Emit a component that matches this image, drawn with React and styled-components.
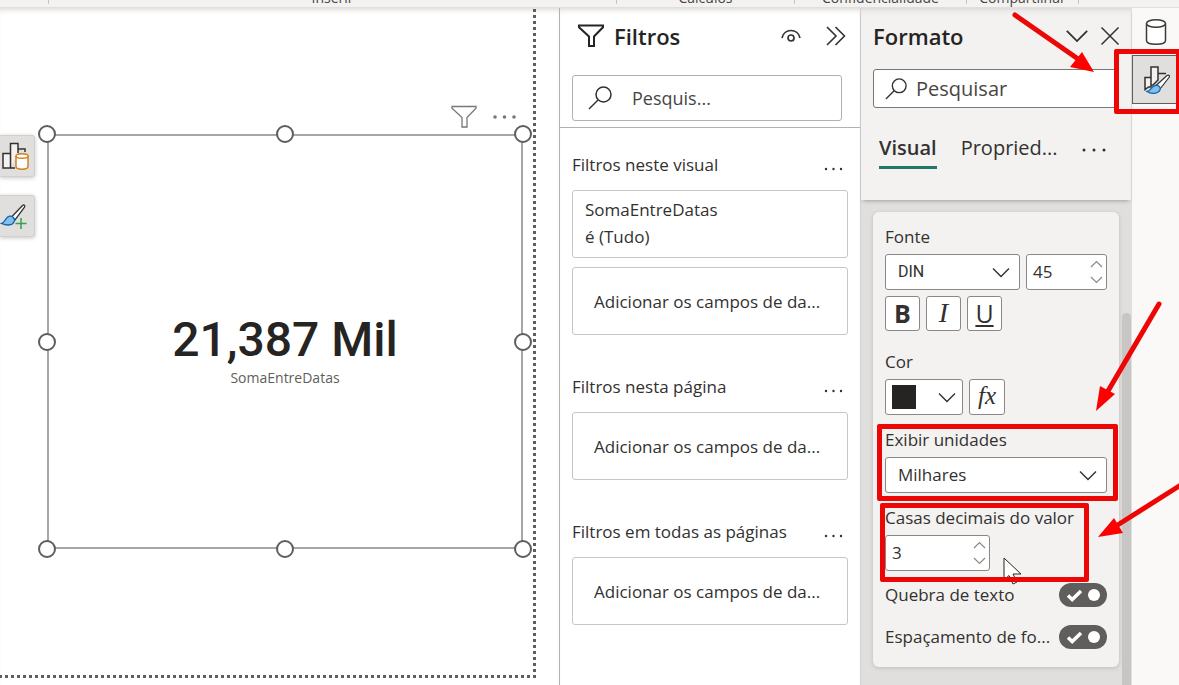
import React, { useState } from "react";
import styled, { createGlobalStyle } from "styled-components";

const GlobalStyle = createGlobalStyle`
  * {
    box-sizing: border-box;
  }
  body {
    margin: 0;
    font-family: "Open Sans", "Noto Sans", sans-serif;
    font-size: 17px;
    line-height: 24px;
    color: #323130;
    background-color: #ffffff;
  }
  button, input, select {
    font: inherit;
    color: inherit;
  }
  h2, h3, p {
    margin: 0;
    font-weight: 400;
    font-size: inherit;
  }
`;

const Page = styled.div`
  position: relative;
  display: flex;
  flex-direction: column;
  height: 100vh;
  overflow: hidden;
`;

/* ribbon */
const Ribbon = styled.header`
  position: relative;
  z-index: 2;
  display: flex;
  align-items: flex-end;
  height: 8px;
  flex-shrink: 0;
  overflow: hidden;
  background-color: #f3f2f1;
  border-bottom: 1px solid #e1dfdd;
`;
const RibbonGroup = styled.div`
  flex: ${(props) => props.$grow || "none"};
  width: ${(props) => props.$width}px;
  height: 18px;
  text-align: center;
  color: #484644;
  font-size: 14px;
  line-height: 18px;
`;
const RibbonDivider = styled.span`
  width: 1px;
  height: 4px;
  align-self: flex-start;
  background-color: #c8c6c4;
`;

const Main = styled.main`
  display: flex;
  flex: 1;
  min-height: 0;
`;

/* report canvas */
const Canvas = styled.section`
  position: relative;
  display: flex;
  flex: 1;
  min-width: 0;
  padding: 0 23px 7px 0;
  box-shadow: inset 0 6px 6px -5px #d2d0ce;
`;
const Sheet = styled.div`
  display: flex;
  flex: 1;
  padding: 126px 13px 129px 47px;
  background:
    repeating-linear-gradient(to bottom, transparent 0 1px, #605e5c 1px 4px, transparent 4px 6px) right top / 3px 100% no-repeat,
    repeating-linear-gradient(to left, #605e5c 0 3px, transparent 3px 6px) left bottom / 100% 3px no-repeat;
`;
const Visual = styled.div`
  position: relative;
  flex: 1;
  display: flex;
  flex-direction: column;
  align-items: center;
  justify-content: center;
  padding-top: 16px;
  border: 2px solid #a6a6a6;
`;
const VisualTools = styled.div`
  position: absolute;
  right: 5px;
  top: -31px;
  display: flex;
  align-items: center;
  gap: 16px;
`;
const Handles = styled.div`
  position: absolute;
  inset: -2px;
`;
const Handle = styled.span`
  position: absolute;
  left: ${(props) => props.$x}%;
  top: ${(props) => props.$y}%;
  width: 18px;
  height: 18px;
  margin: -9px;
  border: 2px solid #605e5c;
  border-radius: 50%;
  background-color: #ffffff;
`;
const CardValue = styled.div`
  font-family: Roboto, sans-serif;
  font-size: 48px;
  font-weight: 500;
  line-height: 56px;
  color: #252423;
`;
const CardLabel = styled.div`
  font-size: 14px;
  line-height: 20px;
  color: #605e5c;
`;
const SideTools = styled.div`
  position: absolute;
  left: 0;
  top: 127px;
  display: flex;
  flex-direction: column;
  gap: 18px;
`;
const SideTool = styled.button`
  display: flex;
  align-items: center;
  width: 35px;
  height: 42px;
  padding: 0;
  border: 1px solid #d2d0ce;
  border-left: 0;
  border-radius: 0 3px 3px 0;
  background-color: #e1dfdd;
  box-shadow: 0 1px 4px #c8c6c4;
`;

/* shared controls */
const IconButton = styled.button`
  display: flex;
  align-items: center;
  justify-content: center;
  padding: 0;
  border: 0;
  background: none;
`;
const SearchBox = styled.label`
  display: flex;
  align-items: center;
  gap: ${(props) => props.$gap}px;
  height: ${(props) => props.$height}px;
  padding: 0 14px 0 ${(props) => props.$inset}px;
  border: 1px solid ${(props) => props.$line};
  border-radius: 3px;
  background-color: #ffffff;
  svg {
    flex-shrink: 0;
  }
`;
const SearchInput = styled.input`
  flex: 1;
  min-width: 0;
  padding: 0;
  border: 0;
  outline: 0;
  background: none;
  font-size: ${(props) => props.$size}px;
  &::placeholder {
    color: #484644;
    opacity: 1;
  }
`;

/* filters pane */
const FiltersPane = styled.aside`
  width: 301px;
  flex-shrink: 0;
  border-left: 1px solid #b3b0ad;
  box-shadow: inset 0 6px 6px -5px #d2d0ce;
`;
const FiltersTop = styled.div`
  padding: 12px 18px 6px 12px;
  border-bottom: 1px solid #b3b0ad;
`;
const PaneHeader = styled.div`
  display: flex;
  align-items: center;
  height: 32px;
`;
const PaneTitle = styled.h2`
  flex: 1;
  font-size: 22px;
  font-weight: 600;
  line-height: 32px;
  color: #252423;
`;
const FiltersHeader = styled(PaneHeader)`
  gap: 10px;
  margin-bottom: 23px;
  padding-left: 6px;
  ${IconButton} + ${IconButton} {
    margin-left: 15px;
    margin-right: -4px;
  }
`;
const FiltersBody = styled.div`
  display: flex;
  flex-direction: column;
  gap: 40px;
  padding: 25px 12px;
`;
const FilterSection = styled.section`
  display: flex;
  flex-direction: column;
  gap: 9px;
`;
const FilterHeading = styled.div`
  display: flex;
  align-items: flex-end;
  justify-content: space-between;
  margin-bottom: 4px;
  padding-right: 5px;
  ${IconButton} {
    padding-bottom: 5px;
  }
`;
const FilterCard = styled.div`
  height: 68px;
  padding: 5px 12px;
  border: 1px solid #c8c6c4;
  border-radius: 3px;
  line-height: 27px;
`;
const DropCard = styled(FilterCard)`
  display: flex;
  align-items: center;
  padding: 0 21px;
  white-space: nowrap;
`;

/* format pane */
const FormatPane = styled.aside`
  display: flex;
  flex-direction: column;
  width: 271px;
  flex-shrink: 0;
  border-left: 1px solid #d2d0ce;
  background-color: #e1dfdd;
`;
const FormatTop = styled.div`
  position: relative;
  height: 192px;
  flex-shrink: 0;
  padding: 12px 12px 0;
  background-color: #f3f2f1;
  box-shadow: 0 3px 4px -2px #a19f9d, inset 0 6px 6px -5px #d2d0ce;
`;
const FormatHeader = styled(PaneHeader)`
  gap: 11px;
  margin-bottom: 17px;
  ${IconButton} + ${IconButton} {
    margin-right: -1px;
  }
`;
const Tabs = styled.div`
  display: flex;
  align-items: center;
  gap: 24px;
  margin-top: 22px;
  padding-left: 6px;
`;
const Tab = styled.button`
  height: 39px;
  padding: 0;
  border: 0;
  border-bottom: 3px solid ${(props) => (props.$active ? "#217867" : "transparent")};
  background: none;
  font-size: 20px;
  font-weight: ${(props) => (props.$active ? 600 : 400)};
`;
const FormatBody = styled.div`
  display: flex;
  flex: 1;
  justify-content: space-between;
  padding: 12px 0 0 12px;
`;
const FormatCard = styled.div`
  flex: 1;
  align-self: flex-start;
  display: flex;
  flex-direction: column;
  gap: 13px;
  padding: 13px 12px 18px;
  border-radius: 6px;
  background-color: #f3f2f1;
  box-shadow: 0 1px 4px #bebbb8;
`;
const Scrollbar = styled.div`
  width: 9px;
  margin: 101px 0 0 3px;
  border-radius: 5px 5px 0 0;
  background-color: #c8c6c4;
`;
const Field = styled.div`
  position: relative;
  display: flex;
  flex-direction: column;
  gap: 5px;
`;
const FontField = styled(Field)`
  margin-bottom: 6px;
`;
const Row = styled.div`
  display: flex;
  gap: 6px;
`;
const StyleRow = styled(Row)`
  margin-top: 1px;
`;
const Control = styled.div`
  position: relative;
  display: flex;
  flex: ${(props) => (props.$width ? "none" : 1)};
  width: ${(props) => (props.$width ? `${props.$width}px` : "auto")};
  height: 36px;
  border: 1px solid #8a8886;
  border-radius: 3px;
  background-color: #ffffff;
`;
const Select = styled.select`
  flex: 1;
  min-width: 0;
  padding: 0 12px;
  border: 0;
  outline: 0;
  appearance: none;
  background: none;
  font-family: ${(props) => (props.$din ? "Roboto, sans-serif" : "inherit")};
  font-size: ${(props) => (props.$din ? 16 : 17)}px;
`;
const NumberInput = styled.input`
  flex: 1;
  min-width: 0;
  padding: 0 6px;
  border: 0;
  outline: 0;
  appearance: textfield;
  background: none;
  &::-webkit-inner-spin-button {
    appearance: none;
  }
`;
const ControlIcon = styled.span`
  position: absolute;
  right: ${(props) => props.$right}px;
  top: 0;
  bottom: 0;
  display: flex;
  align-items: center;
  pointer-events: none;
`;
const SquareButton = styled.button`
  display: flex;
  align-items: center;
  justify-content: center;
  width: ${(props) => props.$size}px;
  height: ${(props) => props.$size}px;
  padding: 0 0 2px;
  border: 1px solid #8a8886;
  border-radius: 3px;
  background-color: #ffffff;
  font-size: 25px;
  line-height: 28px;
`;
const Bold = styled.b`
  font-weight: 700;
`;
const Italic = styled.i`
  font-family: "Liberation Serif", serif;
  font-size: ${(props) => props.$size}px;
`;
const ColorButton = styled.button`
  display: flex;
  flex: 1;
  align-items: center;
  justify-content: space-between;
  padding: 0 6px;
  border: 0;
  background: none;
`;
const Swatch = styled.span`
  width: 24px;
  height: 24px;
  background-color: #252423;
`;
const Switches = styled.div`
  display: flex;
  flex-direction: column;
  gap: 18px;
  margin-top: -1px;
`;
const SwitchRow = styled.label`
  display: flex;
  align-items: center;
  justify-content: space-between;
  white-space: nowrap;
`;
const SwitchTrack = styled.span`
  position: relative;
  display: flex;
  width: 48px;
  height: 24px;
  border-radius: 12px;
  background-color: #605e5c;
`;
const SwitchInput = styled.input`
  position: absolute;
  inset: 0;
  width: 100%;
  height: 100%;
  margin: 0;
  opacity: 0;
`;

/* pane rail */
const Rail = styled.nav`
  display: flex;
  flex-direction: column;
  width: 48px;
  flex-shrink: 0;
  border-left: 1px solid #e1dfdd;
  background-color: #faf9f8;
`;
const RailButton = styled.button`
  position: relative;
  display: flex;
  align-items: center;
  justify-content: center;
  height: ${(props) => (props.$active ? 49 : 47)}px;
  padding: 0;
  border: ${(props) => (props.$active ? "1px solid #605e5c" : "0")};
  background-color: ${(props) => (props.$active ? "#e1dfdd" : "transparent")};
`;

/* tutorial marks drawn over the panes */
const Highlight = styled.span`
  position: absolute;
  z-index: 3;
  top: ${(props) => props.$top}px;
  right: ${(props) => props.$right}px;
  bottom: ${(props) => props.$bottom}px;
  left: ${(props) => props.$left}px;
  border: 5px solid #ec0606;
  border-radius: 2px;
  pointer-events: none;
`;
const Arrows = styled.svg`
  position: absolute;
  z-index: 4;
  top: 0;
  right: 0;
  pointer-events: none;
`;
const Pointer = styled.svg`
  position: absolute;
  left: 118px;
  bottom: -14px;
  z-index: 2;
`;

const Funnel = ({ width, stroke, weight }) => (
  <svg width={width} height="24" viewBox="0 0 26 24" fill="none" stroke={stroke} strokeWidth={weight}>
    <path d="M1 1.500h24v1.800L16 12.500v9.500h-5v-9.500L1 3.300z" />
  </svg>
);

const Magnifier = ({ size }) => (
  <svg width={size} height={size} viewBox="0 0 24 24" fill="none" stroke="#323130" strokeWidth="1.500">
    <circle cx="15.500" cy="8.500" r="7.500" />
    <path d="M10 14L1 23" />
  </svg>
);

const Dots = ({ width, r, color = "#323130" }) => (
  <svg width={width} height="6" viewBox={`0 0 ${width} 6`} fill={color}>
    <circle cx="2" cy="3" r={r} />
    <circle cx={width / 2} cy="3" r={r} />
    <circle cx={width - 2} cy="3" r={r} />
  </svg>
);

const Chevron = ({ width = 18 }) => (
  <svg width={width} height={width / 2 + 2} viewBox="0 0 18 11" fill="none" stroke="#323130" strokeWidth="1.400">
    <path d="M1 1.500l8 8 8-8" />
  </svg>
);

const Spinner = () => (
  <svg width="13" height="24" viewBox="0 0 13 24" fill="none" stroke="#8a8886" strokeWidth="1.200">
    <path d="M1 7l5.500-5.500L12 7M1 17l5.500 5.500L12 17" />
  </svg>
);

const Cylinder = () => (
  <svg width="22" height="28" viewBox="0 0 22 28" fill="#ffffff" stroke="#3b3a39" strokeWidth="1.500">
    <path d="M1.500 5.500v17c0 5 19 5 19 0v-17" />
    <ellipse cx="11" cy="5.500" rx="9.500" ry="3.800" />
  </svg>
);

const ChartData = () => (
  <svg width="30" height="30" viewBox="0 0 30 30" fill="none" strokeWidth="1.500">
    <path d="M3 12.500h7.500V27H3zM10.500 27V2.500h7.500V12M10.500 27H15M18 8h7v3" fill="#f3f2f1" stroke="#323130" />
    <path d="M16 15v10.500c0 3.500 12 3.500 12 0V15" fill="#fff" stroke="#d67f1c" />
    <ellipse cx="22" cy="15" rx="6" ry="2.300" fill="#fff" stroke="#d67f1c" />
  </svg>
);

const BrushPlus = () => (
  <svg width="30" height="30" viewBox="0 0 30 30" fill="none" strokeWidth="1.300">
    <path d="M12 15.500L22.500 4.500c1.500-1.200 3 0 2 1.700L15 19z" fill="#fff" stroke="#323130" />
    <path d="M1.500 22.500c4-1 3.500-6.500 8-7.300 3.500-.5 6 2.800 4.500 5.800-2 4-8 3.500-12.500 1.500z" fill="#83beec" stroke="#1065ab" />
    <path d="M21 17v11M15.500 22.500h11" stroke="#37a04a" strokeWidth="1.500" />
  </svg>
);

const ChartBrush = () => (
  <svg width="28" height="30" viewBox="0 0 28 30" fill="none" strokeWidth="1.500">
    <path d="M3 12.500h6V22H6.500L3 24.500zM9 20V2h7v13l-5 5zM16 8.500h8" fill="#f3f2f1" stroke="#323130" />
    <path d="M14 20.500L25 10.500c1.800-1.200 3 .3 2 2L18 24z" fill="#fff" stroke="#323130" strokeWidth="1.200" />
    <path d="M5 26.500c4 0 4-5.500 8.500-6 3.500-.4 5.500 2 4.500 4.500-2 4-9 4.500-13 1.500z" fill="#83beec" stroke="#1065ab" strokeWidth="1.300" />
  </svg>
);

const Switch = ({ label }) => {
  const [on, setOn] = useState(true);
  return (
    <SwitchRow>
      {label}
      <SwitchTrack>
        <SwitchInput type="checkbox" checked={on} onChange={() => setOn(!on)} />
        <svg width="48" height="24" viewBox="0 0 48 24" fill="none">
          {on && <path d="M9 12.500l4.200 4L22 8" stroke="#fff" strokeWidth="3.500" />}
          <circle cx={on ? 35 : 13} cy="12" r="6" fill="#fff" />
        </svg>
      </SwitchTrack>
    </SwitchRow>
  );
};

const handles = [
  [0, 0], [50, 0], [100, 0],
  [0, 50], [100, 50],
  [0, 100], [50, 100], [100, 100],
];

const sections = [
  { title: "Filtros neste visual", field: "SomaEntreDatas", state: "é (Tudo)" },
  { title: "Filtros nesta página" },
  { title: "Filtros em todas as páginas" },
];

const App = () => {
  return (
    <>
      <GlobalStyle />
      <Page>
        <Ribbon>
          <RibbonGroup $width={48} />
          <RibbonDivider />
          <RibbonGroup $grow={1}>Inserir</RibbonGroup>
          <RibbonDivider />
          <RibbonGroup $width={177}>Cálculos</RibbonGroup>
          <RibbonDivider />
          <RibbonGroup $width={171}>Confidencialidade</RibbonGroup>
          <RibbonDivider />
          <RibbonGroup $width={111}>Compartilhar</RibbonGroup>
          <RibbonDivider />
          <RibbonGroup $width={100} />
        </Ribbon>
        <Main>
          <Canvas>
            <Sheet>
              <Visual>
                <VisualTools>
                  <IconButton aria-label="Filtros do visual">
                    <Funnel width={26} stroke="#797775" weight={1.3} />
                  </IconButton>
                  <IconButton aria-label="Mais opções">
                    <Dots width={23} r={1.8} color="#797775" />
                  </IconButton>
                </VisualTools>
                <CardValue>21,387 Mil</CardValue>
                <CardLabel>SomaEntreDatas</CardLabel>
                <Handles>
                  {handles.map(([x, y]) => (
                    <Handle key={`${x}-${y}`} $x={x} $y={y} />
                  ))}
                </Handles>
              </Visual>
            </Sheet>
            <SideTools>
              <SideTool aria-label="Criar visual"><ChartData /></SideTool>
              <SideTool aria-label="Formatar visual"><BrushPlus /></SideTool>
            </SideTools>
          </Canvas>

          <FiltersPane>
            <FiltersTop>
              <FiltersHeader>
                <Funnel width={26} stroke="#252423" weight={2} />
                <PaneTitle>Filtros</PaneTitle>
                <IconButton aria-label="Mostrar painel">
                  <svg width="20" height="14" viewBox="0 0 20 14" fill="none" stroke="#323130" strokeWidth="1.700">
                    <path d="M1 9C3-1 17-1 19 9" />
                    <circle cx="10" cy="9" r="3" />
                  </svg>
                </IconButton>
                <IconButton aria-label="Recolher">
                  <svg width="20" height="20" viewBox="0 0 20 20" fill="none" stroke="#323130" strokeWidth="1.600">
                    <path d="M1 1l9 9-9 9M9.500 1l9 9-9 9" />
                  </svg>
                </IconButton>
              </FiltersHeader>
              <SearchBox $height={46} $inset={15} $gap={20} $line="#b3b0ad">
                <Magnifier size={24} />
                <SearchInput $size={18} aria-label="Pesquisar filtros" placeholder="Pesquis..." />
              </SearchBox>
            </FiltersTop>
            <FiltersBody>
              {sections.map((section) => (
                <FilterSection key={section.title}>
                  <FilterHeading>
                    <h3>{section.title}</h3>
                    <IconButton aria-label="Mais opções">
                      <Dots width={19} r={1.2} />
                    </IconButton>
                  </FilterHeading>
                  {section.field && (
                    <FilterCard>
                      <p>{section.field}</p>
                      <p>{section.state}</p>
                    </FilterCard>
                  )}
                  <DropCard>Adicionar os campos de da...</DropCard>
                </FilterSection>
              ))}
            </FiltersBody>
          </FiltersPane>

          <FormatPane>
            <FormatTop>
              <FormatHeader>
                <PaneTitle>Formato</PaneTitle>
                <IconButton aria-label="Opções do painel"><Chevron width={24} /></IconButton>
                <IconButton aria-label="Fechar">
                  <svg width="20" height="20" viewBox="0 0 20 20" stroke="#323130" strokeWidth="1.500">
                    <path d="M1.500 1.500l17 17M18.500 1.500l-17 17" />
                  </svg>
                </IconButton>
              </FormatHeader>
              <SearchBox $height={39} $inset={11} $gap={9} $line="#797775">
                <Magnifier size={22} />
                <SearchInput $size={20} aria-label="Pesquisar formato" placeholder="Pesquisar" />
              </SearchBox>
              <Tabs>
                <Tab $active>Visual</Tab>
                <Tab>Propried...</Tab>
                <IconButton aria-label="Mais guias"><Dots width={24} r={1.5} /></IconButton>
              </Tabs>
            </FormatTop>
            <FormatBody>
              <FormatCard>
                <FontField>
                  <label htmlFor="font">Fonte</label>
                  <Row>
                    <Control>
                      <Select id="font" $din defaultValue="DIN">
                        <option>DIN</option>
                      </Select>
                      <ControlIcon $right={9}><Chevron /></ControlIcon>
                    </Control>
                    <Control $width={81}>
                      <NumberInput type="number" aria-label="Tamanho" defaultValue={45} />
                      <ControlIcon $right={3}><Spinner /></ControlIcon>
                    </Control>
                  </Row>
                  <StyleRow>
                    <SquareButton $size={35} aria-label="Negrito"><Bold>B</Bold></SquareButton>
                    <SquareButton $size={35} aria-label="Itálico"><Italic $size={28}>I</Italic></SquareButton>
                    <SquareButton $size={35} aria-label="Sublinhado"><u>U</u></SquareButton>
                  </StyleRow>
                </FontField>
                <Field>
                  <span>Cor</span>
                  <Row>
                    <Control $width={78}>
                      <ColorButton aria-label="Cor">
                        <Swatch />
                        <Chevron />
                      </ColorButton>
                    </Control>
                    <SquareButton $size={36} aria-label="Formatação condicional">
                      <Italic $size={25}>fx</Italic>
                    </SquareButton>
                  </Row>
                </Field>
                <Field>
                  <label htmlFor="units">Exibir unidades</label>
                  <Row>
                    <Control>
                      <Select id="units" defaultValue="Milhares">
                        <option>Milhares</option>
                      </Select>
                      <ControlIcon $right={9}><Chevron /></ControlIcon>
                    </Control>
                  </Row>
                  <Highlight $top={-4} $right={-11} $bottom={-8} $left={-8} />
                </Field>
                <Field>
                  <label htmlFor="decimals">Casas decimais do valor</label>
                  <Control $width={105}>
                    <NumberInput id="decimals" type="number" defaultValue={3} />
                    <ControlIcon $right={3}><Spinner /></ControlIcon>
                  </Control>
                  <Highlight $top={-3} $right={18} $bottom={-11} $left={-5} />
                  <Pointer width="20" height="28" viewBox="0 0 20 28">
                    <path d="M1 1v22l5-4.500 4 8.500 4-2-4-8h8z" fill="#fff" stroke="#252423" />
                  </Pointer>
                </Field>
                <Switches>
                  <Switch label="Quebra de texto" />
                  <Switch label="Espaçamento de fo..." />
                </Switches>
              </FormatCard>
              <Scrollbar />
            </FormatBody>
          </FormatPane>

          <Rail>
            <RailButton aria-label="Dados"><Cylinder /></RailButton>
            <RailButton $active aria-label="Formato">
              <ChartBrush />
              <Highlight $top={-7} $right={-3} $bottom={-11} $left={-19} />
            </RailButton>
          </Rail>
        </Main>
        <Arrows width="179" height="560" viewBox="0 0 179 560" stroke="#ec0606" strokeWidth="5" strokeLinecap="round" fill="#ff0000">
          <path d="M15 15l66 46M159 304l-51 87M184 483l-68 43" />
          <path d="M94 72L70 67l12-15zM96 411l4-25 15 8zM98 537l16-19 9 15z" strokeWidth="0" />
        </Arrows>
      </Page>
    </>
  );
};

export default App;
